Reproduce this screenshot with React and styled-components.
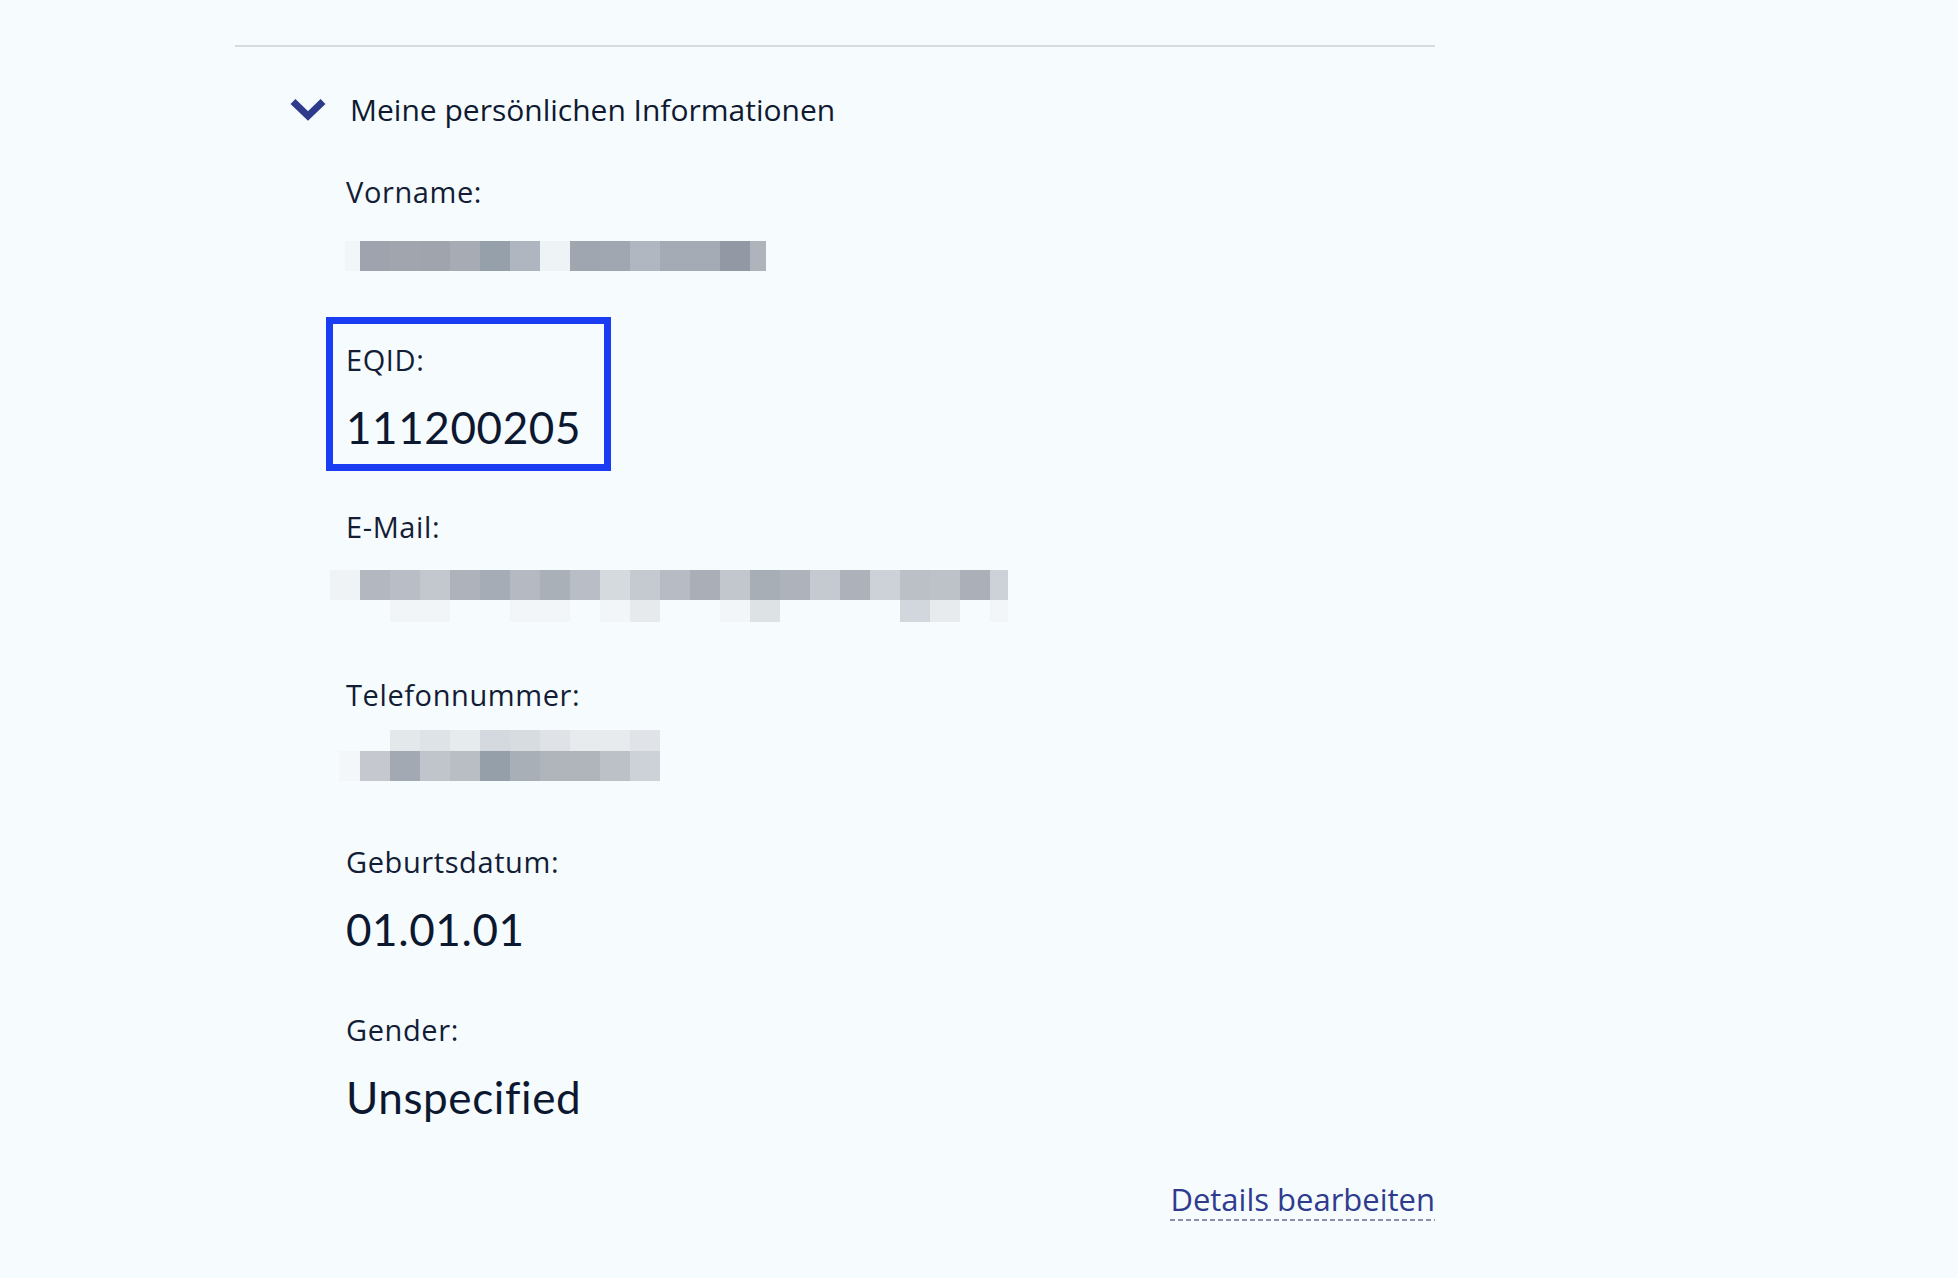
import React from "react";
import styled, { createGlobalStyle } from "styled-components";

const GlobalStyle = createGlobalStyle`
  html, body {
    margin: 0;
    padding: 0;
    background: #f6fbfe;
  }
  body {
    font-family: "Open Sans", "Noto Sans", sans-serif;
    font-variant-ligatures: none;
    color: #101b34;
  }
`;

const Page = styled.div`
  min-height: 1278px;
  background: #f6fbfe;
  padding-top: 45px;
  box-sizing: border-box;
`;

const Container = styled.div`
  margin-left: 235px;
  width: 1200px;
`;

const Divider = styled.hr`
  margin: 0;
  border: 0;
  height: 2px;
  background: #d6dbe0;
`;

const Section = styled.section`
  padding-left: 55px;
`;

const Header = styled.button`
  display: flex;
  align-items: center;
  gap: 24px;
  height: 40px;
  margin-top: 42px;
  padding: 0;
  border: 0;
  background: none;
  cursor: pointer;
  font-family: inherit;
  font-size: 30px;
  color: #0f1a30;
`;

const Chevron = styled.svg`
  width: 36px;
  height: 23px;
  flex: none;
`;

const Fields = styled.div`
  display: flex;
  flex-direction: column;
  align-items: flex-start;
  gap: 54.5px;
  margin-top: 45px;
  padding-left: 56px;
`;

const Field = styled.div`
  position: relative;
  display: flex;
  flex-direction: column;
  gap: 21px;

  &::after {
    content: "";
    display: ${(p) => (p.$highlight ? "block" : "none")};
    position: absolute;
    top: -25px;
    left: -20px;
    right: -30px;
    bottom: -16px;
    border: 7px solid #1a3cf2;
    pointer-events: none;
  }
`;

const Label = styled.div`
  font-size: 29px;
  line-height: 36px;
  letter-spacing: 0.6px;
  color: #131d36;
`;

const Value = styled.div`
  height: 56px;
  font-family: "Lato", "Open Sans", sans-serif;
  font-size: 44px;
  line-height: 56px;
  letter-spacing: 0.6px;
  color: #0c1730;
  white-space: nowrap;
`;

const Mosaic = styled.div`
  display: flex;
  flex-direction: column;
  margin-top: ${(p) => p.$top}px;
  margin-left: ${(p) => p.$left}px;
`;

const MosaicRow = styled.div`
  display: flex;
  height: ${(p) => p.$h}px;
`;

const Cell = styled.div`
  width: ${(p) => p.$w}px;
  background: ${(p) => p.$c};
`;

const Footer = styled.div`
  display: flex;
  justify-content: flex-end;
  margin-top: 56px;
`;

const EditLink = styled.a`
  display: inline-block;
  font-size: 31px;
  line-height: 36px;
  padding-bottom: 4px;
  color: #2f3c8e;
  text-decoration: none;
  cursor: pointer;
  background-image: repeating-linear-gradient(
    to right,
    #8a90ab 0,
    #8a90ab 5px,
    transparent 5px,
    transparent 8px
  );
  background-size: 100% 2px;
  background-position: left bottom;
  background-repeat: no-repeat;
`;

const bg = "transparent";

const firstName = [
  {
    h: 30,
    cells: [
      [15, "#f1f6f9"],
      [30, "#9ea3ad"],
      [30, "#a0a5ae"],
      [30, "#9fa4ad"],
      [30, "#a6abb4"],
      [30, "#96a0aa"],
      [30, "#b0b6bf"],
      [30, "#eef4f5"],
      [30, "#a0a6b0"],
      [30, "#a1a7b1"],
      [30, "#b0b7c0"],
      [30, "#a5abb4"],
      [30, "#a5abb4"],
      [30, "#9399a4"],
      [16, "#aeb3bc"],
    ],
  },
];

const email = [
  {
    h: 30,
    cells: [
      [30, "#f0f3f6"],
      [30, "#b2b7c0"],
      [30, "#b9bec6"],
      [30, "#c3c8cf"],
      [30, "#aeb3bb"],
      [30, "#a6acb5"],
      [30, "#b5bac2"],
      [30, "#aab0b8"],
      [30, "#b9bec6"],
      [30, "#d4dadd"],
      [30, "#c5cad1"],
      [30, "#b7bcc4"],
      [30, "#a9aeb7"],
      [30, "#c2c7ce"],
      [30, "#a7aeb6"],
      [30, "#aeb3bb"],
      [30, "#c5cad1"],
      [30, "#adb2ba"],
      [30, "#cdd2d8"],
      [30, "#bbc0c7"],
      [30, "#bdc2c9"],
      [30, "#aaafb8"],
      [18, "#cdd2d8"],
    ],
  },
  {
    h: 22,
    cells: [
      [30, bg],
      [30, bg],
      [30, "#f1f5f8"],
      [30, "#f1f5f8"],
      [30, bg],
      [30, bg],
      [30, "#f2f6f9"],
      [30, "#f2f6f9"],
      [30, bg],
      [30, "#f2f6f9"],
      [30, "#e7eaed"],
      [30, bg],
      [30, bg],
      [30, "#f2f6f9"],
      [30, "#dde2e4"],
      [30, bg],
      [30, bg],
      [30, bg],
      [30, bg],
      [30, "#d2d7de"],
      [30, "#e8ebee"],
      [30, bg],
      [18, "#f2f6f9"],
    ],
  },
];

const phone = [
  {
    h: 21,
    cells: [
      [21, bg],
      [30, bg],
      [30, "#e3e8eb"],
      [30, "#dee3e8"],
      [30, "#e6ebed"],
      [30, "#d4d9df"],
      [30, "#d7dce1"],
      [30, "#dfe3e8"],
      [30, "#e7ebee"],
      [30, "#e7ebee"],
      [30, "#e0e4e9"],
    ],
  },
  {
    h: 30,
    cells: [
      [21, "#f3f7fa"],
      [30, "#c5c9cf"],
      [30, "#a3a9b2"],
      [30, "#c0c5cc"],
      [30, "#b9bec5"],
      [30, "#959fa9"],
      [30, "#a9afb7"],
      [30, "#b0b5bc"],
      [30, "#b0b5bc"],
      [30, "#bcc1c7"],
      [30, "#cdd2d8"],
    ],
  },
];

const Blurred = ({ rows, top, left }) => (
  <Mosaic $top={top} $left={left} aria-hidden="true">
    {rows.map((row, i) => (
      <MosaicRow key={i} $h={row.h}>
        {row.cells.map(([w, c], j) => (
          <Cell key={j} $w={w} $c={c} />
        ))}
      </MosaicRow>
    ))}
  </Mosaic>
);

const fields = [
  { label: "Vorname:", blur: { rows: firstName, top: 10, left: -1 } },
  { label: "EQID:", value: "111200205", highlight: true },
  { label: "E-Mail:", blur: { rows: email, top: 4, left: -16 } },
  { label: "Telefonnummer:", blur: { rows: phone, top: -4, left: -7 } },
  { label: "Geburtsdatum:", value: "01.01.01" },
  { label: "Gender:", value: "Unspecified" },
];

export default function App() {
  return (
    <>
      <GlobalStyle />
      <Page>
        <Container>
          <Divider />
          <Section>
            <Header type="button" aria-expanded="true">
              <Chevron viewBox="0 0 36 23">
                <polyline
                  points="3,3.5 18,18 33,3.5"
                  fill="none"
                  stroke="#2e3a8a"
                  strokeWidth="7"
                  strokeLinejoin="miter"
                />
              </Chevron>
              Meine persönlichen Informationen
            </Header>
            <Fields>
              {fields.map((f) => (
                <Field key={f.label} $highlight={f.highlight}>
                  <Label>{f.label}</Label>
                  <Value>{f.blur ? <Blurred {...f.blur} /> : f.value}</Value>
                </Field>
              ))}
            </Fields>
          </Section>
          <Footer>
            <EditLink>Details bearbeiten</EditLink>
          </Footer>
        </Container>
      </Page>
    </>
  );
}
